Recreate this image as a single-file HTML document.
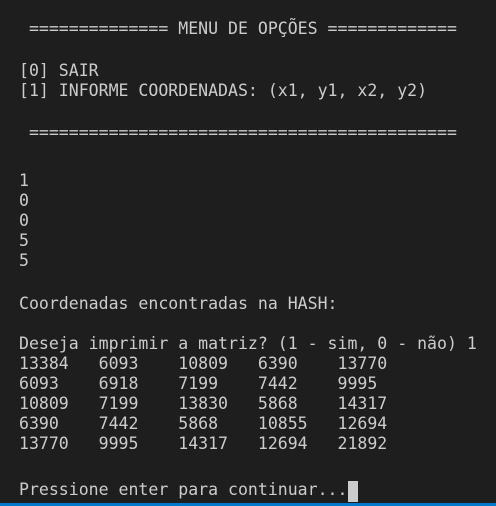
<!DOCTYPE html>
<html><head><meta charset="utf-8"><style>
html,body{margin:0;padding:0;background:#1e1e1e;width:496px;height:506px;overflow:hidden;position:relative}
.l{position:absolute;left:19px;margin:0;font-family:"DejaVu Sans Mono","Liberation Mono",monospace;font-size:16.55px;line-height:20px;color:#cccccc;white-space:pre;tab-size:8;-moz-tab-size:8}
.bar{position:absolute;left:0;bottom:0;width:496px;height:3px;background:#007acc}
.cur{position:absolute;left:348px;top:481px;width:10px;height:21px;background:#cccccc}
</style></head><body>
<div class="l" style="top:19px"> ============== MENU DE OPÇÕES =============</div>
<div class="l" style="top:61px">[0] SAIR</div>
<div class="l" style="top:81px">[1] INFORME COORDENADAS: (x1, y1, x2, y2)</div>
<div class="l" style="top:123px"> ===========================================</div>
<div class="l" style="top:171px">1</div>
<div class="l" style="top:191px">0</div>
<div class="l" style="top:211px">0</div>
<div class="l" style="top:231px">5</div>
<div class="l" style="top:251px">5</div>
<div class="l" style="top:294px">Coordenadas encontradas na HASH:</div>
<div class="l" style="top:334px">Deseja imprimir a matriz? (1 - sim, 0 - não) 1</div>
<div class="l" style="top:354px">13384	6093	10809	6390	13770</div>
<div class="l" style="top:374px">6093	6918	7199	7442	9995</div>
<div class="l" style="top:394px">10809	7199	13830	5868	14317</div>
<div class="l" style="top:414px">6390	7442	5868	10855	12694</div>
<div class="l" style="top:434px">13770	9995	14317	12694	21892</div>
<div class="l" style="top:480px">Pressione enter para continuar...</div>
<div class="cur"></div>
<div class="bar"></div>
</body></html>
